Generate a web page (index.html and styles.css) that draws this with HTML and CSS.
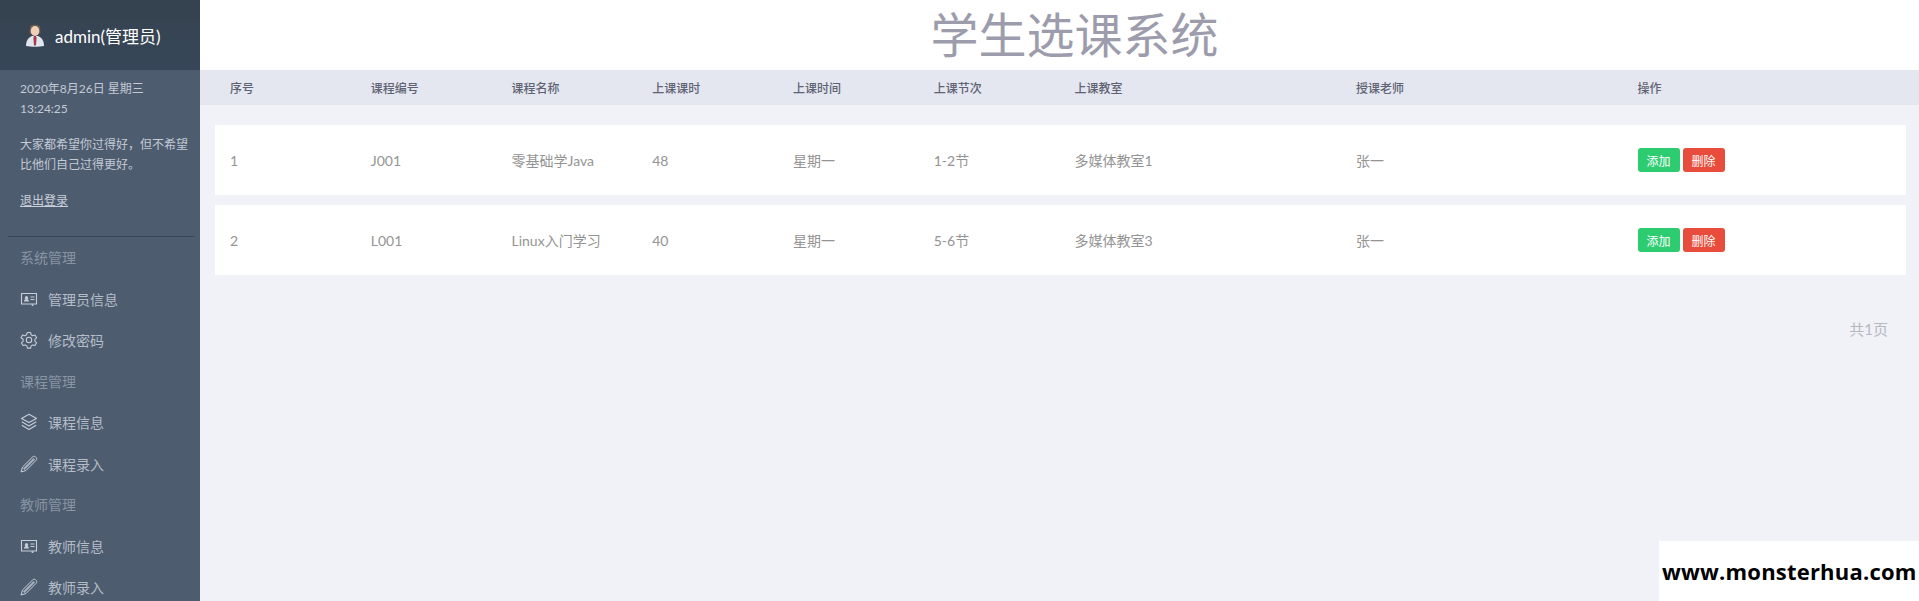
FILE: index.html
```html
<!DOCTYPE html>
<html lang="en">
<head>
    <meta charset="UTF-8">
    <meta name="viewport" content="width=device-width, initial-scale=1.0">
    <title>学生选课系统</title>
    <link rel="stylesheet" href="styles.css">
</head>
<body>

    <svg class="icon-defs" width="0" height="0">
        <symbol id="i-card" viewBox="0 0 18 18">
            <path d="M1.500 3.500h15v10.500h-15z" fill="none" stroke="currentColor" stroke-width="1.100"/>
            <path d="M4 11.500c0-1.500 1-2 1.600-2.200a1.700 1.700 0 1 1 1.800 0c.6.2 1.600.7 1.600 2.200z" fill="currentColor"/>
            <path d="M10.500 7h4M10.500 9.500h4" stroke="currentColor" stroke-width="1"/>
            <path d="M12.500 14.200v1.800" stroke="currentColor" stroke-width="1.600"/>
        </symbol>
        <symbol id="i-gear" viewBox="0 0 18 18">
            <path d="M7.400 1.500h3.200l.5 2.200 1.700 1 2.200-.7 1.600 2.800-1.700 1.500v2l1.700 1.500-1.600 2.800-2.200-.7-1.700 1-.5 2.200H7.400l-.5-2.200-1.700-1-2.200.7-1.600-2.800 1.700-1.500v-2L1 6.800l1.600-2.800 2.200.7 1.700-1z" fill="none" stroke="currentColor" stroke-width="1.100" stroke-linejoin="round"/>
            <circle cx="9" cy="9" r="2.700" fill="none" stroke="currentColor" stroke-width="1.100"/>
        </symbol>
        <symbol id="i-layers" viewBox="0 0 18 18">
            <path d="M9 1.200l7.500 4.200L9 9.600 1.500 5.400z" fill="none" stroke="currentColor" stroke-width="1.100" stroke-linejoin="round"/>
            <path d="M1.800 8.800L9 12.900l7.200-4.100M1.800 12.200L9 16.400l7.200-4.200" fill="none" stroke="currentColor" stroke-width="1.100" stroke-linejoin="round"/>
        </symbol>
        <symbol id="i-pen" viewBox="0 0 18 18">
            <path d="M1 17l1.500-5L12.800 1.800c.7-.7 1.900-.7 2.700 0l.7.7c.7.800.7 2 0 2.700L6 15.500z" fill="none" stroke="currentColor" stroke-width="1" stroke-linejoin="round"/>
            <path d="M3 13.500L13.500 3l1.500 1.500L4.500 15z" fill="currentColor" opacity="0.75"/>
        </symbol>
    </svg>

    <div class="page">
        <aside class="sidebar">
            <div class="user-bar">
                <svg class="avatar" width="20" height="24" viewBox="0 0 20 24">
                    <path d="M5 3.500C6 1 14 1 15 3.500l.6 7H4.400z" fill="#6b5a52"/>
                    <ellipse cx="10" cy="8" rx="4.300" ry="5" fill="#f0cfb6"/>
                    <path d="M1 23c0-6 3-9 6-10h6c3 1 6 4 6 10-5 1-13 1-18 0z" fill="#dfe6ee"/>
                    <path d="M9 13h2l.6 2-.6 7.500h-2l-.6-7.500z" fill="#a83a4a"/>
                </svg>
                <span class="user-name">admin(管理员)</span>
            </div>
            <div class="user-info">
                <p class="date-line">2020年8月26日 星期三<br>13:24:25</p>
                <p class="quote">大家都希望你过得好，但不希望比他们自己过得更好。</p>
                <a class="logout" href="#">退出登录</a>
            </div>
            <nav class="menu">
                <div class="menu-title">系统管理</div>
                <a class="menu-item" href="#"><svg><use href="#i-card"/></svg>管理员信息</a>
                <a class="menu-item" href="#"><svg><use href="#i-gear"/></svg>修改密码</a>
                <div class="menu-title">课程管理</div>
                <a class="menu-item" href="#"><svg><use href="#i-layers"/></svg>课程信息</a>
                <a class="menu-item" href="#"><svg><use href="#i-pen"/></svg>课程录入</a>
                <div class="menu-title">教师管理</div>
                <a class="menu-item" href="#"><svg><use href="#i-card"/></svg>教师信息</a>
                <a class="menu-item" href="#"><svg><use href="#i-pen"/></svg>教师录入</a>
            </nav>
        </aside>

        <main class="content">
            <h1 class="page-title">学生选课系统</h1>

            <div class="table-head grid-row">
                <span>序号</span>
                <span>课程编号</span>
                <span>课程名称</span>
                <span>上课课时</span>
                <span>上课时间</span>
                <span>上课节次</span>
                <span>上课教室</span>
                <span>授课老师</span>
                <span>操作</span>
            </div>

            <div class="table-body">
                <div class="table-row grid-row">
                    <span>1</span>
                    <span>J001</span>
                    <span>零基础学Java</span>
                    <span>48</span>
                    <span>星期一</span>
                    <span>1-2节</span>
                    <span>多媒体教室1</span>
                    <span>张一</span>
                    <span class="actions">
                        <button class="btn btn-add">添加</button>
                        <button class="btn btn-del">删除</button>
                    </span>
                </div>
                <div class="table-row grid-row">
                    <span>2</span>
                    <span>L001</span>
                    <span>Linux入门学习</span>
                    <span>40</span>
                    <span>星期一</span>
                    <span>5-6节</span>
                    <span>多媒体教室3</span>
                    <span>张一</span>
                    <span class="actions">
                        <button class="btn btn-add">添加</button>
                        <button class="btn btn-del">删除</button>
                    </span>
                </div>
            </div>

            <div class="pager">共1页</div>
        </main>
    </div>

    <div class="watermark">www.monsterhua.com</div>

</body>
</html>
```

FILE: styles.css
```css
* {
    box-sizing: border-box;
}
body {
    margin: 0;
    height: 100vh;
    overflow: hidden;
    font-family: Lato, "Noto Sans CJK SC", sans-serif;
    background-color: #f0f2f7;
}
.icon-defs {
    position: absolute;
}
.page {
    display: flex;
    height: 100vh;
}

/* sidebar */
.sidebar {
    width: 200px;
    flex-shrink: 0;
    overflow: hidden;
    background: #4e5c70;
    color: #c3cad4;
    font-size: 12px;
}
.user-bar {
    height: 70px;
    display: flex;
    align-items: center;
    gap: 10px;
    padding-left: 25px;
    background: linear-gradient(#35424f, #374759);
    color: white;
    font-size: 17px;
}
.avatar {
    flex-shrink: 0;
}
.user-info {
    margin: 0 5px 0 8px;
    padding: 9px 4px 25px 12px;
    border-bottom: 1px solid #3c4859;
    line-height: 20px;
}
.user-info p {
    margin: 0 0 16px;
}
.logout {
    color: #c9d0d9;
    text-decoration: underline;
}
.menu {
    padding-left: 20px;
}
.menu-title {
    height: 41.200px;
    line-height: 41.200px;
    font-size: 14px;
    color: #8794a4;
}
.menu-item {
    height: 41.200px;
    display: flex;
    align-items: center;
    gap: 10px;
    font-size: 14px;
    color: #b4bcc7;
    text-decoration: none;
}
.menu-item svg {
    width: 18px;
    height: 18px;
    color: #c6ced8;
}

/* main area */
.content {
    flex: 1;
    min-width: 0;
}
.page-title {
    margin: 0;
    height: 70px;
    padding-left: 30px;
    background: white;
    color: #9c9cac;
    font-size: 48px;
    font-weight: 400;
    line-height: 70px;
    text-align: center;
}
.grid-row {
    display: grid;
    grid-template-columns: repeat(6, 1fr) repeat(3, 2fr);
    align-items: center;
}
.grid-row span {
    padding-left: 15px;
}
.table-head {
    height: 35px;
    padding: 0 15px;
    background: #e4e7ef;
    color: #5f6373;
    font-size: 12px;
    font-weight: 500;
}
.table-body {
    display: flex;
    flex-direction: column;
    gap: 10px;
    padding: 20px 13px 0 15px;
}
.table-row {
    height: 70px;
    padding-right: 2px;
    background: white;
    color: #949494;
    font-size: 14px;
}
.actions {
    display: flex;
    gap: 3px;
}
.btn {
    width: 42px;
    height: 24px;
    padding: 0;
    border: none;
    border-radius: 3px;
    color: white;
    font-family: inherit;
    font-size: 12px;
}
.btn-add {
    background-color: #2ecc71;
}
.btn-del {
    background-color: #e74c3c;
}
.pager {
    padding: 44px 31px 0 0;
    color: #b5b8bf;
    font-size: 15px;
    line-height: 20px;
    text-align: right;
}

/* sits over the page corner */
.watermark {
    position: absolute;
    right: 0;
    bottom: 0;
    width: 260px;
    height: 60px;
    padding-left: 3px;
    background: white;
    color: black;
    font-family: "Open Sans", sans-serif;
    font-size: 22px;
    font-weight: 700;
    letter-spacing: 0.200px;
    line-height: 60px;
    white-space: nowrap;
}
```
